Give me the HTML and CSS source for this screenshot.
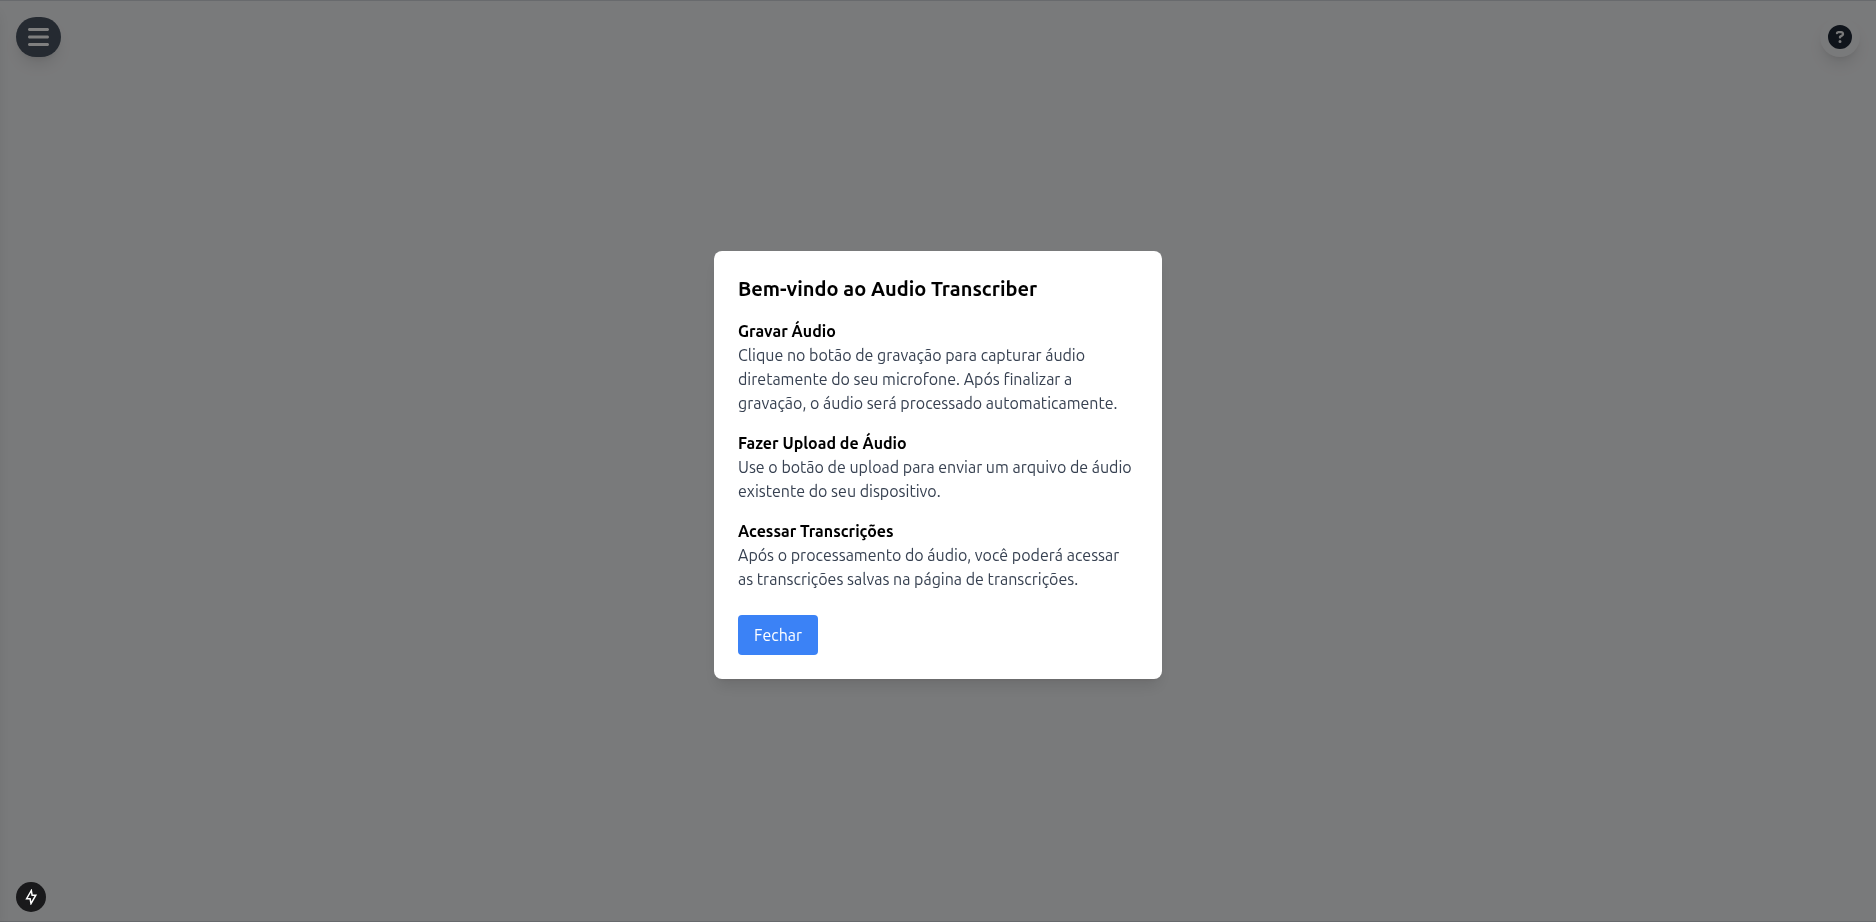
FILE: index.html
```html
<!DOCTYPE html>
<html lang="pt-BR">
<head>
<meta charset="utf-8">
<meta name="viewport" content="width=device-width, initial-scale=1">
<title>Audio Transcriber</title>
<link rel="stylesheet" href="styles.css">
</head>
<body>
<div class="page">
  <header class="topbar">
    <button class="menu-button" type="button" aria-label="Abrir menu">
      <svg class="menu-icon" viewBox="0 0 448 512" aria-hidden="true"><path fill="currentColor" d="M0 96C0 78.300 14.300 64 32 64l384 0c17.700 0 32 14.300 32 32s-14.300 32-32 32L32 128C14.300 128 0 113.700 0 96zM0 256c0-17.700 14.300-32 32-32l384 0c17.700 0 32 14.300 32 32s-14.300 32-32 32L32 288c-17.700 0-32-14.300-32-32zM448 416c0 17.700-14.300 32-32 32L32 448c-17.700 0-32-14.300-32-32s14.300-32 32-32l384 0c17.700 0 32 14.300 32 32z"/></svg>
    </button>
    <button class="help-button" type="button" aria-label="Ajuda">
      <svg class="help-icon" viewBox="0 0 512 512" aria-hidden="true"><path fill="currentColor" d="M256 512A256 256 0 1 0 256 0a256 256 0 1 0 0 512zM169.800 165.300c7.900-22.300 29.100-37.300 52.800-37.300l58.300 0c34.900 0 63.100 28.300 63.100 63.100c0 22.600-12.100 43.500-31.700 54.800L280 264.400c-.2 13-10.900 23.600-24 23.600c-13.300 0-24-10.700-24-24l0-13.500c0-8.600 4.600-16.500 12.100-20.800l44.300-25.400c4.700-2.700 7.600-7.700 7.600-13.100c0-8.400-6.800-15.100-15.100-15.100l-58.300 0c-3.400 0-6.400 2.100-7.500 5.300l-.4 1.200c-4.400 12.500-18.200 19-30.600 14.600s-19-18.200-14.600-30.600l.4-1.200zM224 352a32 32 0 1 1 64 0 32 32 0 1 1 -64 0z"/></svg>
    </button>
  </header>
</div>
<aside class="drawer" aria-hidden="true"></aside>
<div class="overlay">
  <main class="dialog" role="dialog" aria-modal="true" aria-labelledby="dialog-title">
    <h2 class="dialog-title" id="dialog-title">Bem-vindo ao Audio Transcriber</h2>
    <div class="sections">
      <section>
        <h3 class="section-title">Gravar Áudio</h3>
        <p class="section-text">Clique no botão de gravação para capturar áudio diretamente do seu microfone. Após finalizar a gravação, o áudio será processado automaticamente.</p>
      </section>
      <section>
        <h3 class="section-title">Fazer Upload de Áudio</h3>
        <p class="section-text">Use o botão de upload para enviar um arquivo de áudio existente do seu dispositivo.</p>
      </section>
      <section>
        <h3 class="section-title">Acessar Transcrições</h3>
        <p class="section-text">Após o processamento do áudio, você poderá acessar as transcrições salvas na página de transcrições.</p>
      </section>
    </div>
    <button class="close-button" type="button">Fechar</button>
  </main>
</div>
<button class="dev-button" type="button" aria-label="Ferramentas de desenvolvimento">
  <svg class="dev-icon" viewBox="0 0 16 16" aria-hidden="true"><path d="M8.300 1.500 3.600 9.700H7.100L8 14.600l4.800-8.400H9.100z" fill="none" stroke="currentColor" stroke-width="1.500"/></svg>
</button>
</body>
</html>
```

FILE: styles.css
```css
* {
  box-sizing: border-box;
}

body {
  margin: 0;
  background: #f3f4f6;
  color: #000;
  font-family: Ubuntu, "Noto Sans", sans-serif;
  font-size: 16px;
  line-height: 24px;
}

button {
  border: 0;
  padding: 0;
  font: inherit;
  cursor: pointer;
}

svg {
  display: block;
}

.page {
  min-height: 100vh;
  border-top: 1px solid #d1d5db;
  border-bottom: 1px solid #d1d5db;
}

.topbar {
  display: flex;
  justify-content: space-between;
  align-items: center;
  padding: 16px;
}

.menu-button,
.help-button {
  display: grid;
  place-items: center;
  height: 40px;
  border-radius: 20px;
  box-shadow: 0 10px 15px -3px rgb(0 0 0 / 10%), 0 4px 6px -4px rgb(0 0 0 / 10%);
}

.menu-button {
  width: 45px;
  background: #4b5563;
  color: #fff;
}

.menu-icon {
  width: 21px;
  height: 24px;
}

.help-button {
  width: 40px;
  background: #f3f4f6;
  color: #1f2937;
}

.help-icon {
  width: 24px;
  height: 24px;
}

.drawer {
  position: fixed;
  inset: 0 100% 0 auto;
  width: 256px;
  box-shadow: 0 10px 15px -3px rgb(0 0 0 / 10%), 0 4px 6px -4px rgb(0 0 0 / 10%);
}

.overlay {
  position: fixed;
  inset: 0;
  display: grid;
  place-items: center;
  padding: 16px;
  background: rgb(0 0 0 / 50%);
}

.dialog {
  width: 100%;
  max-width: 448px;
  padding: 24px;
  margin-top: 8px;
  border-radius: 8px;
  background: #fff;
  box-shadow: 0 10px 15px -3px rgb(0 0 0 / 10%), 0 4px 6px -4px rgb(0 0 0 / 10%);
}

.dialog-title {
  margin: 0 0 16px;
  font-size: 20px;
  font-weight: 600;
  line-height: 28px;
}

.sections {
  display: grid;
  gap: 16px;
}

.section-title,
.section-text {
  margin: 0;
  font-size: 16px;
}

.section-title {
  font-weight: 600;
}

.section-text {
  color: #374151;
}

.close-button {
  margin-top: 24px;
  padding: 8px 16px;
  border-radius: 4px;
  background: #3b82f6;
  color: #fff;
}

.dev-button {
  position: fixed;
  left: 16px;
  bottom: 10px;
  display: grid;
  place-items: center;
  width: 30px;
  height: 30px;
  border-radius: 50%;
  background: #19191b;
  color: #fff;
}

.dev-icon {
  width: 16px;
  height: 16px;
}
```
